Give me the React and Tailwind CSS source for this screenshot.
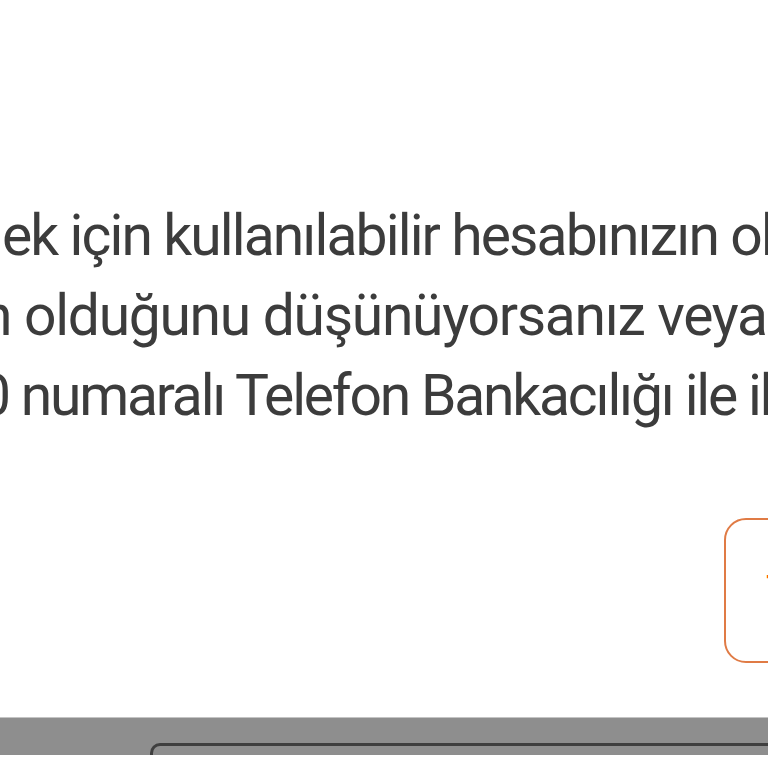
import React from 'react';

const lines = [
  { text: 'ek için kullanılabilir hesabınızın olması', shift: 'ml-[2px] tracking-[-1.9px]' },
  { text: 'n olduğunu düşünüyorsanız veya', shift: '-ml-[19px] tracking-[-1.3px]' },
  { text: '0 numaralı Telefon Bankacılığı ile iletişime', shift: '-ml-[21px] tracking-[-2.2px]' },
];

export default function App() {
  return (
    <div className="w-[768px] h-[768px] overflow-hidden bg-white flex flex-col" style={{ fontFamily: 'Roboto, "Noto Sans", sans-serif' }}>
      {/* message text */}
      <div className="pt-[196px] text-[57px] leading-[80px] text-[#3c3c3c]">
        {lines.map((line) => (
          <div key={line.text} className={`whitespace-nowrap ${line.shift}`}>
            {line.text}
          </div>
        ))}
      </div>

      {/* button row */}
      <div className="flex justify-end mt-[82px]">
        <button className="w-[120px] h-[145px] -mr-[76px] shrink-0 border-2 border-[#e07b45] rounded-[22px] bg-white text-left pl-[40px] text-[#ff6200] text-[40px]">
          Tamam
        </button>
      </div>

      {/* bottom bar */}
      <div className="mt-[54px] h-[38px] bg-[#8e8e8e] border-t border-[#c4c4c4] flex flex-col justify-end">
        <div className="ml-[150px] h-[12px] border-t-[3px] border-l-[3px] border-[#3f3f3f] rounded-tl-[10px]"></div>
      </div>
      <div className="flex-1 bg-white"></div>
    </div>
  );
}
